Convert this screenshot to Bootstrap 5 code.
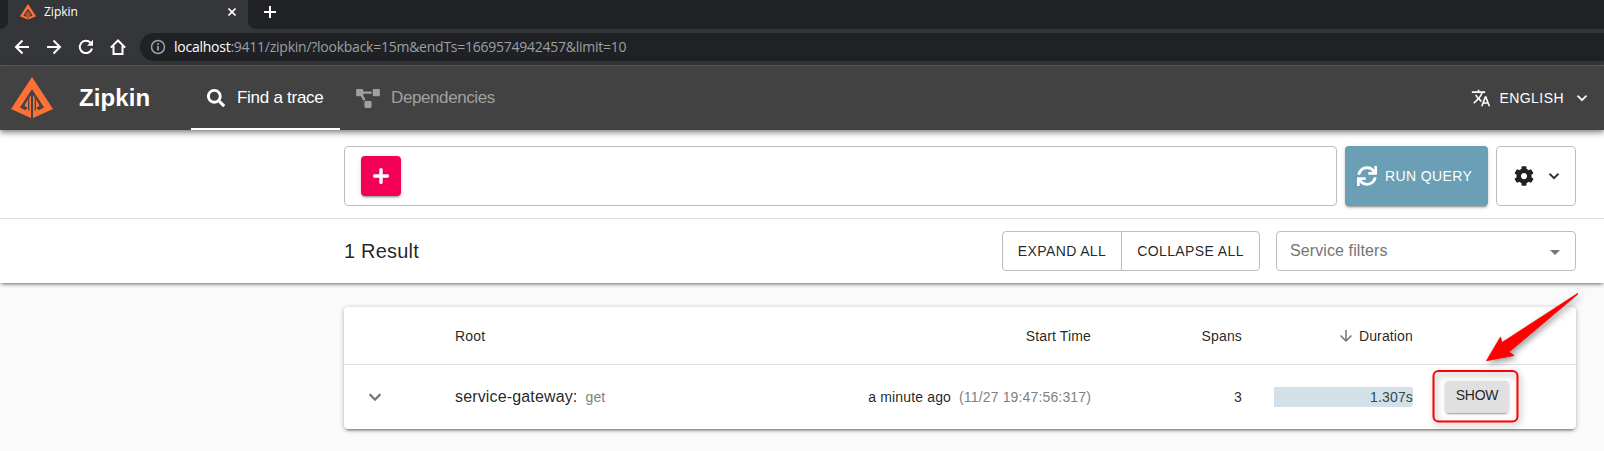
<!DOCTYPE html>
<html lang="en">
<head>
<meta charset="utf-8">
<meta name="viewport" content="width=device-width, initial-scale=1">
<title>Zipkin</title>
<link href="https://cdn.jsdelivr.net/npm/bootstrap@5.3.0/dist/css/bootstrap.min.css" rel="stylesheet">
<style>
body{font-family:"Liberation Sans",Arial,sans-serif;background:#fafafa;color:rgba(0,0,0,.87);height:451px;overflow:hidden;font-size:14px;line-height:20px}
svg{display:block;flex:none}
.chrome-ui{font-family:"Open Sans","Noto Sans",sans-serif;background:#35363a;height:66px;border-bottom:1px solid #5f6064}
.tabstrip{height:29px;background:#35363a}
.strip-edge{width:8px;background:#202124;border-bottom-right-radius:8px}
.tab-item{width:240px;padding:0 12px 5px 12px;color:#fff;font-size:12px}
.strip-rest{background:#202124;border-bottom-left-radius:8px;padding:0 0 5px 16px}
.toolbar{height:36px;padding:0 0 0 14px;color:#fff}
.omnibox{height:28px;border-radius:14px 0 0 14px;background:#202124;font-size:14px;letter-spacing:-.25px;color:#9aa0a6;padding-left:10px;margin:0 0 0 14px}
.omnibox b{font-weight:400;color:#fff}
.appbar{height:64px;background:#424242;color:#fff;position:relative;z-index:3;box-shadow:0 2px 4px -1px rgba(0,0,0,.3),0 4px 5px rgba(0,0,0,.2),0 1px 10px rgba(0,0,0,.14)}
.logo-mark{margin-left:11px}
.brand-name{font-size:24px;font-weight:700;width:112px;margin-left:26px;letter-spacing:.1px}
.app-tab{height:64px;font-size:17px;gap:12px}
.app-tab.on{width:149px;border-bottom:2px solid #fff;padding:2px 0 0 16px;letter-spacing:-.27px}
.app-tab.off{color:#a0a0a0;padding-left:16px;gap:11px;letter-spacing:-.4px}
.lang{font-size:14px;letter-spacing:.45px;padding-right:12px}
.panel{background:#fff;position:relative;z-index:2;box-shadow:0 3px 3px -2px rgba(0,0,0,.35),0 1px 5px rgba(0,0,0,.3)}
.inset-l{padding-left:344px;padding-right:28px}
.query-row{height:89px;padding-top:16px;border-bottom:1px solid #e0e0e0;gap:8px}
.outl{border:1px solid #bdbdbd;border-radius:4px;background:#fff}
.plusbtn{width:40px;height:40px;background:#f50057;border-radius:4px;margin-left:16px;box-shadow:0 3px 1px -2px rgba(0,0,0,.2),0 2px 2px rgba(0,0,0,.14),0 1px 5px rgba(0,0,0,.12)}
.h60{height:60px}
.runbtn{width:143px;background:#6a9fb5;color:#fff;border-radius:4px;font-size:14px;letter-spacing:.4px;gap:8px;padding-left:12px;box-shadow:0 3px 1px -2px rgba(0,0,0,.2),0 2px 2px rgba(0,0,0,.14),0 1px 5px rgba(0,0,0,.12)}
.gearbtn{width:80px;gap:10px;padding-left:17px}
.result-row{height:64px}
.result-row h6{font-size:20px;line-height:24px;letter-spacing:.2px}
.pair{height:40px;width:258px;margin-right:16px;font-size:14px;letter-spacing:.39px}
.pair span{line-height:38px;text-align:center}
.pair span:first-child{width:119px;border-right:1px solid #bdbdbd}
.svcsel{width:300px;height:40px;font-size:16px;letter-spacing:.1px;color:#757575;padding:0 15px 1px 13px}
.trace-card{margin:24px 28px 0 344px;height:122px;background:#fff;border-radius:4px;box-shadow:0 3px 3px -2px rgba(0,0,0,.45),0 1px 5px rgba(0,0,0,.28)}
.trace-grid{display:grid;grid-template-columns:111px 380px 256px 151px 171px 1fr;align-items:center;letter-spacing:.15px}
.trace-head{height:58px;border-bottom:1px solid #e0e0e0}
.trace-line{height:63px}
.chev{padding-left:19px;color:#757575}
.svc-name{font-size:16px}
.dur{margin-left:32px;height:20px;background:#d2e1e8;border-radius:0 3px 3px 0;color:#37474f}
.muted{color:#808080}
.showbtn{width:64px;height:32px;background:#e0e0e0;border-radius:4px;margin-left:32px;font-size:14px;letter-spacing:-.3px;line-height:29px;box-shadow:0 3px 1px -2px rgba(0,0,0,.25),0 1px 3px rgba(0,0,0,.2)}
.callout-mark{position:absolute;left:1424px;top:262px;z-index:5;overflow:visible;filter:drop-shadow(2px 3px 3px rgba(0,0,0,.38))}
</style>
<script src="https://cdn.jsdelivr.net/npm/bootstrap@5.3.0/dist/js/bootstrap.bundle.min.js"></script>
</head>
<body>
<svg width="0" height="0" class="position-absolute" aria-hidden="true"><defs>
<symbol id="logo" viewBox="0 0 42 42"><path fill="#ff7035" fill-rule="evenodd" d="M21 0L42 32L22 41V18L23.700 20.500V33.800L25 33.300V22L28.600 29L25.500 30.500L27.500 33.300L33 30.500L21 12.300L9 30.500L14.500 33.300L16.500 30.500L13.400 29L17 22V33.300L18.300 33.800V20.500L20 18V41L0 32Z"/></symbol>
<symbol id="down" viewBox="0 0 24 24"><path fill="currentColor" stroke="currentColor" stroke-width=".3" d="M7.410 8.590L12 13.170l4.590-4.580L18 10l-6 6-6-6 1.410-1.410z"/></symbol>
</defs></svg>
<div class="chrome-ui">
  <div class="tabstrip d-flex">
    <div class="strip-edge"></div>
    <div class="tab-item d-flex align-items-center">
      <svg width="16" height="16"><use href="#logo"/></svg><span class="ms-2">Zipkin</span>
      <svg class="ms-auto" width="8" height="8" viewBox="0 0 8 8" stroke="#fff" stroke-width="1.600"><path d="M.5.5l7 7M7.500.5l-7 7"/></svg>
    </div>
    <div class="strip-rest flex-grow-1 d-flex align-items-center"><svg width="12" height="12" viewBox="0 0 12 12" stroke="#fff" stroke-width="2"><path d="M6 0v12M0 6h12"/></svg></div>
  </div>
  <div class="toolbar d-flex align-items-center">
    <svg width="16" height="16" viewBox="0 0 16 16" fill="none" stroke="#fff" stroke-width="2"><path d="M15 8H2.500M8.500 1.500L2 8l6.500 6.500"/></svg>
    <svg class="ms-3" width="16" height="16" viewBox="0 0 16 16" fill="none" stroke="#fff" stroke-width="2"><path d="M1 8h12.500M7.500 1.500L14 8l-6.500 6.500"/></svg>
    <svg class="ms-3" width="16" height="16" viewBox="0 0 16 16" fill="none" stroke="#fff" stroke-width="2"><path d="M14 9.500A6.200 6.200 0 1 1 12.500 3.600"/><path fill="#fff" stroke="none" d="M15 .8v6H9z"/></svg>
    <svg class="ms-3" width="16" height="16" viewBox="0 0 16 16" fill="none" stroke="#fff" stroke-width="2"><path d="M.8 8.600L8 1.500l7.200 7.100M3.500 7v8h9V7"/></svg>
    <div class="omnibox flex-grow-1 d-flex align-items-center"><svg width="16" height="16" viewBox="0 0 16 16" fill="none" stroke="#9aa0a6" stroke-width="1.500"><circle cx="8" cy="8" r="6.500"/><path stroke-width="1.800" d="M8 7v4.500M8 4.200V6"/></svg><span class="ms-2"><b>localhost</b>:9411/zipkin/?lookback=15m&amp;endTs=1669574942457&amp;limit=10</span></div>
  </div>
</div>
<header class="appbar d-flex align-items-center">
  <svg class="logo-mark" width="42" height="42"><use href="#logo"/></svg>
  <div class="brand-name">Zipkin</div>
  <nav class="d-flex">
    <div class="app-tab on d-flex align-items-center"><svg width="18" height="18" viewBox="0 0 512 512"><path fill="#fff" d="M505 442.700L405.300 343c-4.500-4.500-10.600-7-17-7H372c27.600-35.300 44-79.700 44-128C416 93.100 322.900 0 208 0S0 93.100 0 208s93.100 208 208 208c48.300 0 92.700-16.400 128-44v16.300c0 6.400 2.500 12.500 7 17l99.700 99.700c9.400 9.400 24.600 9.400 33.900 0l28.300-28.300c9.400-9.400 9.400-24.600.1-34zM208 336c-70.700 0-128-57.200-128-128 0-70.700 57.200-128 128-128 70.700 0 128 57.200 128 128 0 70.700-57.200 128-128 128z"/></svg><span>Find a trace</span></div>
    <div class="app-tab off d-flex align-items-center"><svg width="24" height="19" viewBox="0 0 640 512"><path fill="currentColor" d="M384 320H256c-17.670 0-32 14.330-32 32v128c0 17.670 14.330 32 32 32h128c17.670 0 32-14.330 32-32V352c0-17.670-14.330-32-32-32zM192 32c0-17.670-14.330-32-32-32H32C14.330 0 0 14.330 0 32v128c0 17.670 14.330 32 32 32h95.720l73.160 128.040C211.980 300.980 232.400 288 256 288h.28L192 175.510V128h224V64H192V32zM608 0H480c-17.670 0-32 14.330-32 32v128c0 17.670 14.330 32 32 32h128c17.670 0 32-14.330 32-32V32c0-17.670-14.330-32-32-32z"/></svg><span>Dependencies</span></div>
  </nav>
  <div class="lang ms-auto d-flex align-items-center"><svg width="20" height="20" viewBox="0 0 24 24"><path fill="#fff" d="M12.870 15.070l-2.540-2.510.03-.03c1.740-1.940 2.980-4.170 3.710-6.530H17V4h-7V2H8v2H1v1.990h11.170C11.500 7.920 10.440 9.750 9 11.350 8.070 10.320 7.300 9.190 6.690 8h-2c.73 1.630 1.730 3.170 2.980 4.560l-5.090 5.020L4 19l5-5 3.110 3.110.76-2.040zM18.500 10h-2L12 22h2l1.120-3h4.750L21 22h2l-4.500-12zm-2.620 7l1.620-4.330L19.120 17h-3.240z"/></svg><span class="ms-2 me-2">ENGLISH</span><svg width="20" height="20"><use href="#down"/></svg></div>
</header>
<section class="panel">
  <div class="query-row inset-l d-flex">
    <div class="outl h60 flex-grow-1 d-flex align-items-center"><div class="plusbtn d-flex align-items-center justify-content-center"><svg width="16" height="18" viewBox="0 0 448 512"><path fill="#fff" d="M416 208H272V64c0-17.670-14.330-32-32-32h-32c-17.670 0-32 14.330-32 32v144H32c-17.670 0-32 14.330-32 32v32c0 17.670 14.330 32 32 32h144v144c0 17.670 14.330 32 32 32h32c17.670 0 32-14.330 32-32V304h144c17.670 0 32-14.330 32-32v-32c0-17.670-14.330-32-32-32z"/></svg></div></div>
    <div class="runbtn h60 d-flex align-items-center"><svg width="20" height="20" viewBox="0 0 512 512"><path fill="#fff" d="M440.650 12.570l4 82.770A247.160 247.160 0 0 0 255.830 8C134.730 8 33.910 94.920 12.290 209.820A12 12 0 0 0 24.090 224h49.050a12 12 0 0 0 11.670-9.260 175.910 175.910 0 0 1 317-56.940l-101.460-4.860a12 12 0 0 0-12.570 12v47.410a12 12 0 0 0 12 12H500a12 12 0 0 0 12-12V12a12 12 0 0 0-12-12h-47.370a12 12 0 0 0-11.980 12.570zM255.830 432a175.610 175.610 0 0 1-146-77.800l101.800 4.870a12 12 0 0 0 12.570-12v-47.400a12 12 0 0 0-12-12H12a12 12 0 0 0-12 12V500a12 12 0 0 0 12 12h47.350a12 12 0 0 0 12-12.600l-4.150-82.570A247.170 247.170 0 0 0 255.830 504c121.110 0 221.930-86.920 243.550-201.820a12 12 0 0 0-11.800-14.180h-49.050a12 12 0 0 0-11.670 9.260A175.860 175.860 0 0 1 255.830 432z"/></svg><span>RUN QUERY</span></div>
    <div class="gearbtn outl h60 d-flex align-items-center"><svg width="20" height="20" viewBox="0 0 512 512"><path fill="#212121" d="M487.400 315.700l-42.600-24.600c4.300-23.200 4.300-47 0-70.200l42.600-24.600c4.900-2.800 7.100-8.600 5.500-14-11.100-35.600-30-67.800-54.700-94.600-3.800-4.100-10-5.100-14.800-2.300L380.800 110c-17.900-15.400-38.500-27.300-60.800-35.100V25.800c0-5.600-3.900-10.500-9.400-11.700-36.700-8.200-74.300-7.800-109.200 0-5.500 1.200-9.400 6.100-9.400 11.700V75c-22.200 7.900-42.800 19.800-60.800 35.100L88.700 85.500c-4.900-2.800-11-1.900-14.800 2.300-24.700 26.700-43.600 58.900-54.700 94.600-1.700 5.400.6 11.200 5.500 14L67.300 221c-4.300 23.200-4.300 47 0 70.200l-42.600 24.600c-4.900 2.800-7.100 8.600-5.500 14 11.100 35.600 30 67.800 54.700 94.600 3.800 4.100 10 5.100 14.800 2.300l42.600-24.600c17.900 15.400 38.500 27.300 60.800 35.100v49.200c0 5.600 3.900 10.500 9.400 11.700 36.700 8.200 74.300 7.800 109.200 0 5.500-1.200 9.400-6.100 9.400-11.700v-49.200c22.200-7.900 42.800-19.800 60.800-35.100l42.600 24.600c4.900 2.800 11 1.900 14.800-2.300 24.700-26.700 43.600-58.900 54.700-94.600 1.500-5.500-.7-11.300-5.600-14.100zM256 336c-44.100 0-80-35.900-80-80s35.900-80 80-80 80 35.900 80 80-35.900 80-80 80z"/></svg><svg width="20" height="20"><use href="#down"/></svg></div>
  </div>
  <div class="result-row inset-l d-flex align-items-center">
    <h6 class="m-0 me-auto fw-normal">1 Result</h6>
    <div class="pair outl d-flex"><span>EXPAND ALL</span><span class="flex-grow-1">COLLAPSE ALL</span></div>
    <div class="svcsel outl d-flex align-items-center justify-content-between"><span>Service filters</span><svg class="mt-1" width="10" height="5" viewBox="0 0 10 5"><path fill="#757575" d="M0 0h10L5 5z"/></svg></div>
  </div>
</section>
<main class="trace-card">
  <div class="trace-grid trace-head">
    <span></span><span>Root</span><span class="text-end">Start Time</span><span class="text-end">Spans</span>
    <span class="d-flex align-items-center justify-content-end"><svg width="18" height="18" viewBox="0 0 24 24" class="me-1"><path fill="#757575" d="M20 12l-1.410-1.410L13 16.170V4h-2v12.170l-5.580-5.590L4 12l8 8 8-8z"/></svg>Duration</span><span></span>
  </div>
  <div class="trace-grid trace-line">
    <span class="chev"><svg width="24" height="24"><use href="#down"/></svg></span>
    <span><span class="svc-name">service-gateway:</span><span class="muted ms-2">get</span></span>
    <span class="text-end text-nowrap">a minute ago<span class="muted ms-2">(11/27 19:47:56:317)</span></span>
    <span class="text-end">3</span><span class="dur text-end">1.307s</span>
    <div class="showbtn text-center">SHOW</div>
  </div>
</main>
<svg class="callout-mark" width="170" height="170" viewBox="1424 262 170 170"><rect x="1433.500" y="371" width="84" height="50.500" rx="5" fill="none" stroke="#f00" stroke-width="2"/><path fill="#f00" stroke="#f00" stroke-width=".8" stroke-linejoin="round" d="M1578 294L1509 352L1514 355.500L1486.500 360.700L1500.500 337L1502 342.500L1577.500 293.500Z"/></svg>
</body>
</html>
